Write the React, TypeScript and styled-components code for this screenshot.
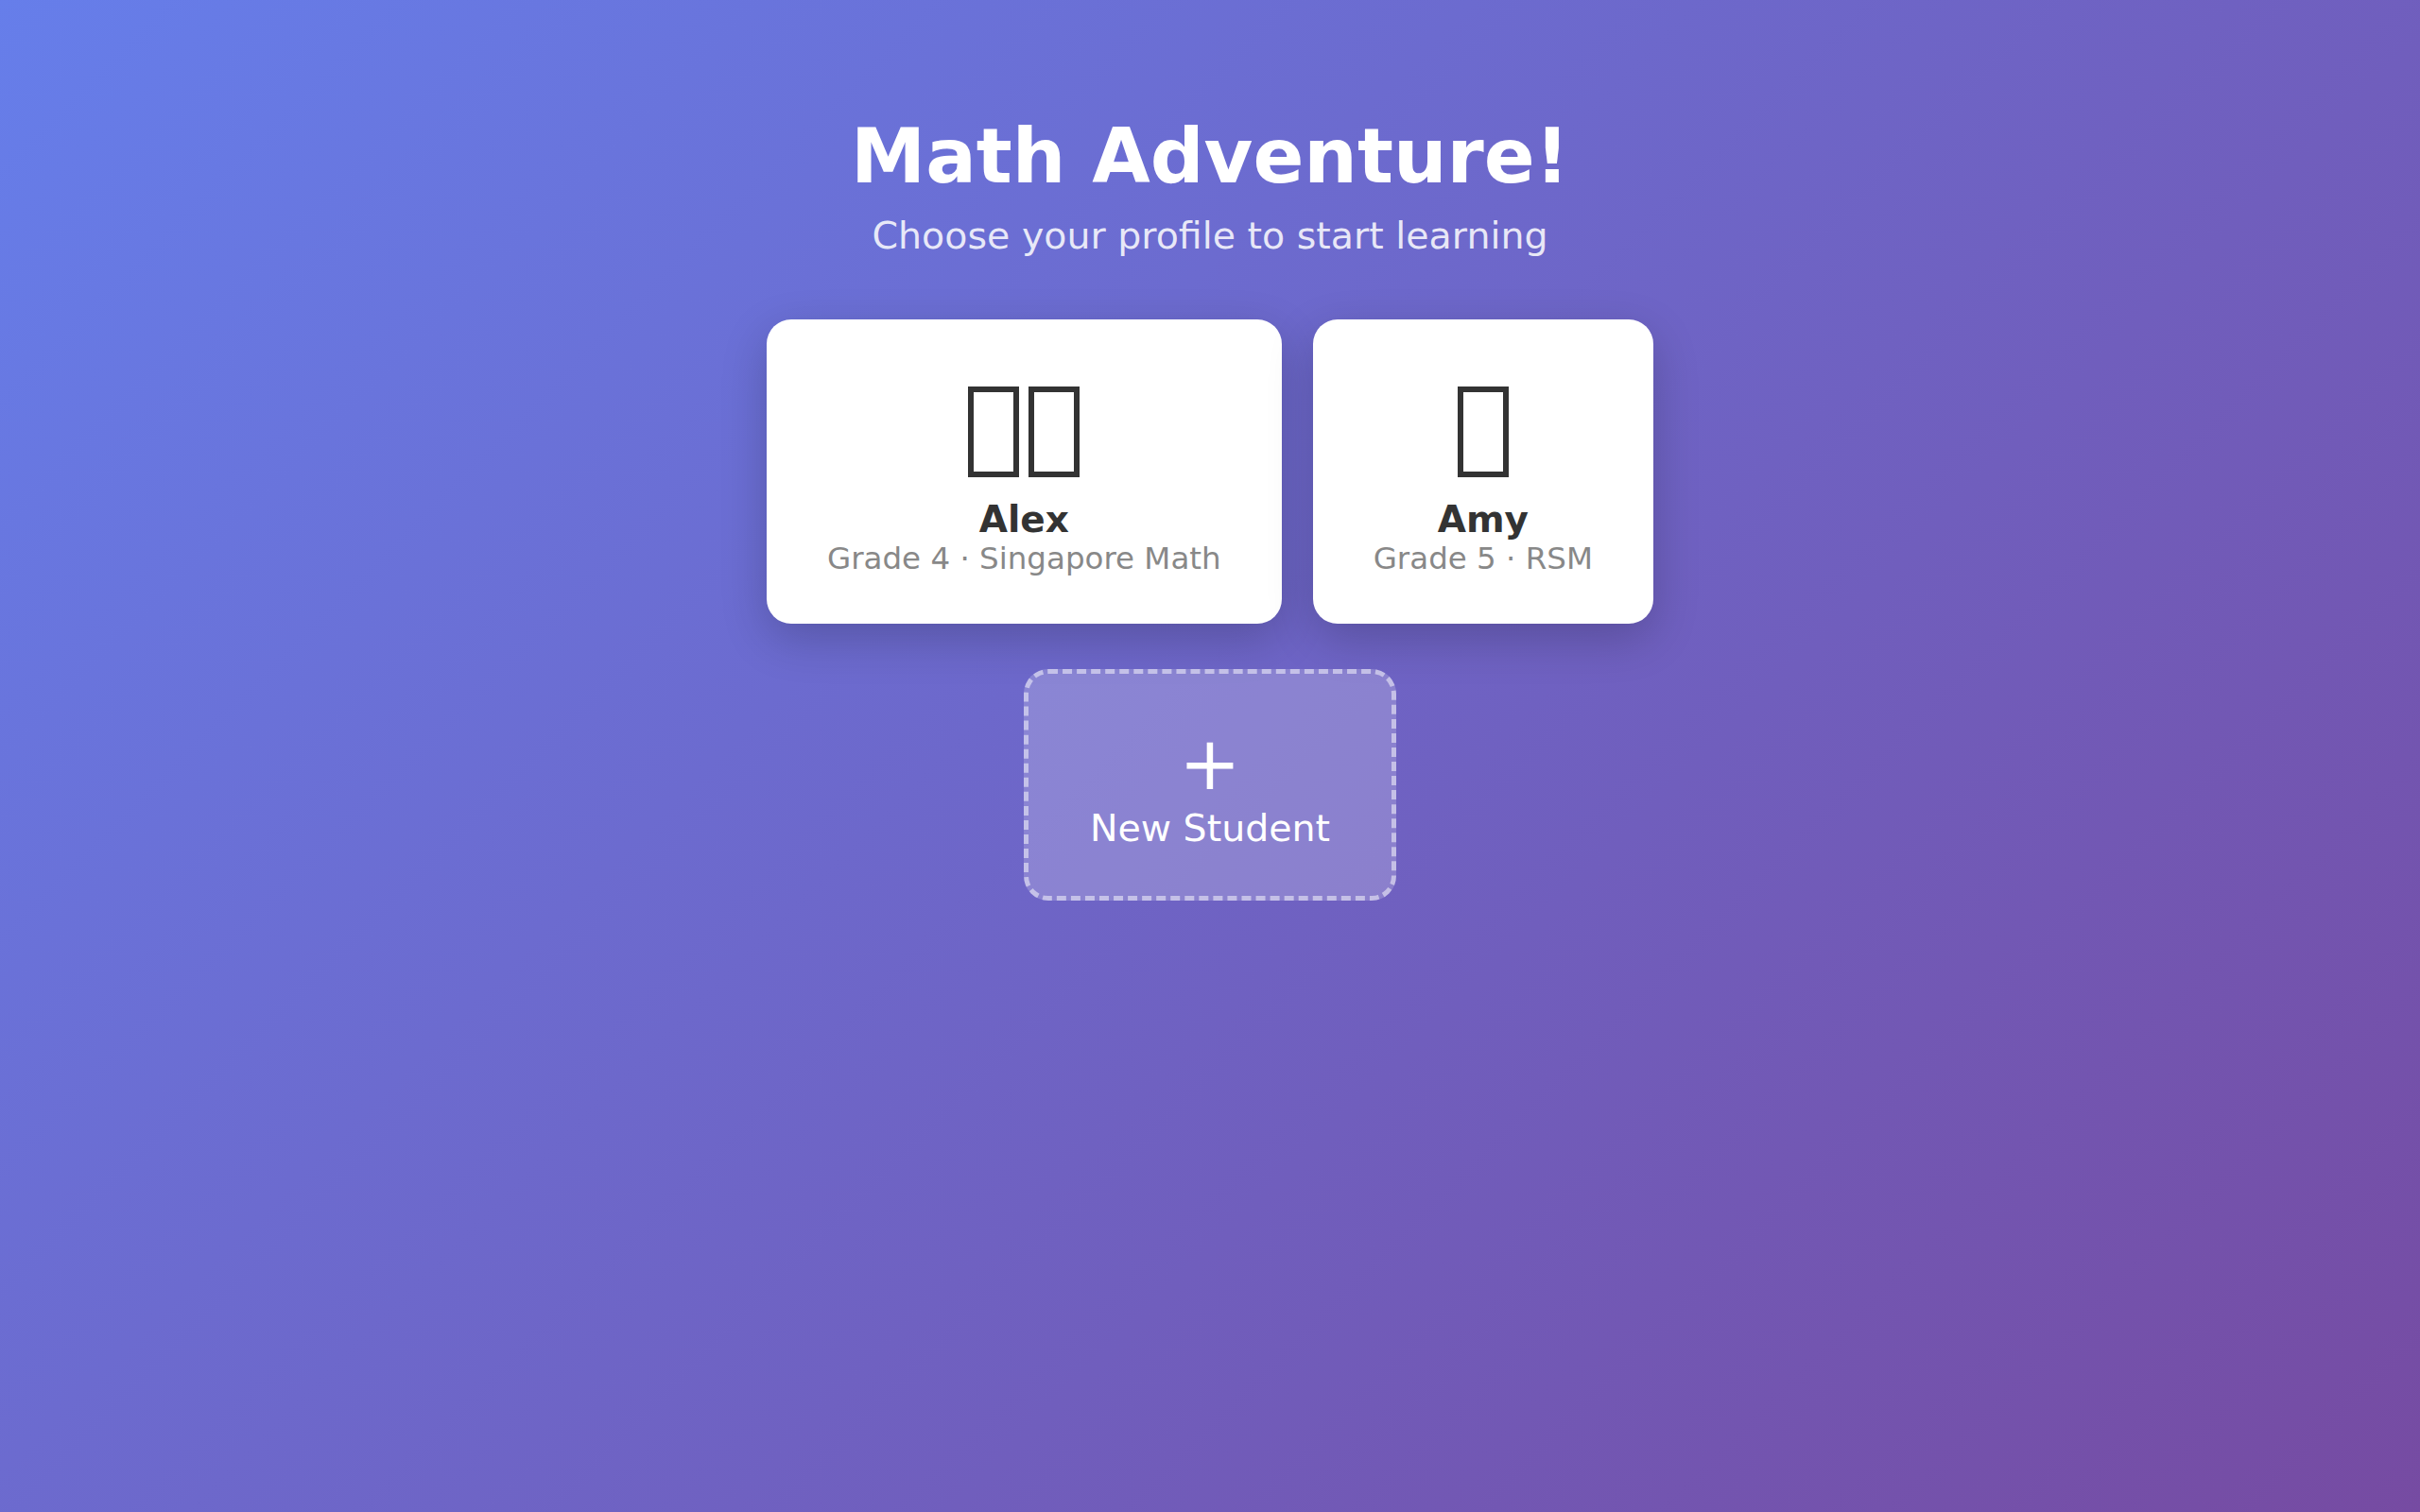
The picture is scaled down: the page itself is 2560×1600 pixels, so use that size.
import React from "react";
import styled, { createGlobalStyle } from "styled-components";

const Global = createGlobalStyle`
  html, body {
    margin: 0;
    padding: 0;
  }
  body {
    font-family: "DejaVu Sans", "Noto Sans", sans-serif;
  }
  * { box-sizing: border-box; }
`;

const Page = styled.div`
  min-height: 100vh;
  background: linear-gradient(135deg, #667eea 0%, #764ba2 100%);
  display: flex;
  flex-direction: column;
  align-items: center;
  padding-top: 119px;
`;

const Title = styled.h1`
  margin: 0 0 14px;
  font-size: 79.5px;
  font-weight: 700;
  color: #ffffff;
  line-height: normal;
`;

const Subtitle = styled.p`
  margin: 0 0 66px;
  font-size: 39.5px;
  color: rgba(255, 255, 255, 0.85);
  line-height: normal;
`;

const CardRow = styled.div`
  display: flex;
  gap: 33px;
  justify-content: center;
  margin-bottom: 48px;
`;

const Card = styled.button`
  background: #ffffff;
  border: none;
  border-radius: 26px;
  padding: 52px 64px 50px;
  display: flex;
  flex-direction: column;
  align-items: center;
  box-shadow: 0 16px 49px rgba(0, 0, 0, 0.2);
  font-family: "DejaVu Sans", sans-serif;
  cursor: pointer;
`;

const Avatar = styled.div`
  display: flex;
  gap: 10px;
  justify-content: center;
  margin: 19px 0 22px;
`;

/* missing-glyph box, as the avatar emoji appears in the reference */
const Tofu = styled.span`
  display: block;
  width: 54px;
  height: 96px;
  border: 6px solid #333333;
`;

const Name = styled.div`
  font-size: 39px;
  font-weight: 700;
  color: #333333;
  line-height: normal;
`;

const Meta = styled.div`
  font-size: 32.5px;
  color: #888888;
  line-height: normal;
`;

const NewButton = styled.button`
  width: 394px;
  height: 245px;
  background: rgba(255, 255, 255, 0.2);
  border: 5px dashed rgba(255, 255, 255, 0.5);
  border-radius: 26px;
  display: flex;
  flex-direction: column;
  align-items: center;
  justify-content: center;
  color: #ffffff;
  font-family: "DejaVu Sans", sans-serif;
  cursor: pointer;
  padding: 0;
`;

const Plus = styled.div`
  font-size: 78px;
  line-height: normal;
`;

const NewLabel = styled.div`
  font-size: 39.5px;
  line-height: normal;
`;

const profiles = [
  { avatar: "👨‍🎓", glyphs: 2, name: "Alex", meta: "Grade 4 · Singapore Math" },
  { avatar: "👧", glyphs: 1, name: "Amy", meta: "Grade 5 · RSM" },
];

export default function App() {
  return (
    <>
      <Global />
      <Page>
        <Title>Math Adventure!</Title>
        <Subtitle>Choose your profile to start learning</Subtitle>
        <CardRow>
          {profiles.map((p) => (
            <Card key={p.name}>
              <Avatar role="img" aria-label={p.avatar}>
                {Array.from({ length: p.glyphs }).map((_, i) => (
                  <Tofu key={i} />
                ))}
              </Avatar>
              <Name>{p.name}</Name>
              <Meta>{p.meta}</Meta>
            </Card>
          ))}
        </CardRow>
        <NewButton>
          <Plus>+</Plus>
          <NewLabel>New Student</NewLabel>
        </NewButton>
      </Page>
    </>
  );
}
